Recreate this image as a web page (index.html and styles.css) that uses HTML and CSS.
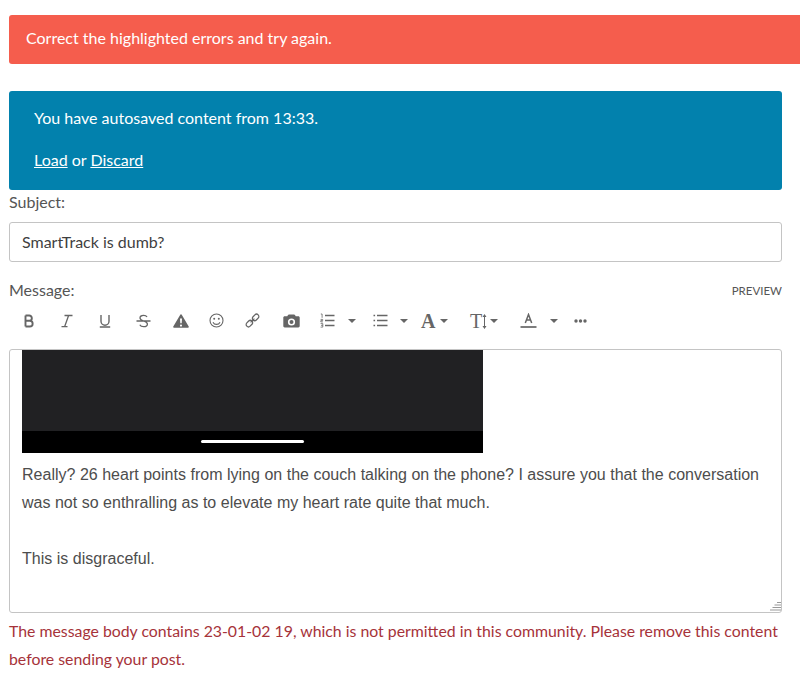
FILE: index.html
```html
<!DOCTYPE html>
<html lang="en">
<head>
<meta charset="utf-8">
<title>Compose message</title>
<link rel="stylesheet" href="styles.css">
</head>
<body>
<main class="page">
  <div class="alert alert-error">Correct the highlighted errors and try again.</div>
  <div class="alert alert-info">
    <p class="info-line">You have autosaved content from 13:33.</p>
    <p class="info-line"><a href="#">Load</a> or <a href="#">Discard</a></p>
  </div>
  <label class="field-label subject-label">Subject:</label>
  <div class="input">SmartTrack is dumb?</div>
  <div class="message-head">
    <label class="field-label">Message:</label>
    <a class="preview" href="#">PREVIEW</a>
  </div>
  <div class="toolbar">
    <span class="tool t-b"><svg width="12" height="14" viewBox="0 0 12 14"><path class="ln" stroke-width="1.9" d="M2.500 1.500v11M2.500 1.500h3.700a2.600 2.600 0 0 1 0 5.300H2.500M6.200 6.800h.6a2.850 2.850 0 0 1 0 5.700H2.500"/></svg></span>
    <span class="tool t-i"><svg width="14" height="14" viewBox="0 0 14 14"><path class="ln" stroke-width="1.3" d="M4.500 1.500h8M1.500 12.700h6M8.600 1.500L4.600 12.700"/></svg></span>
    <span class="tool t-u"><svg width="12" height="14" viewBox="0 0 12 14"><path class="ln" stroke-width="1.4" d="M2 1v6.200a4 4 0 0 0 8 0V1M.8 13h10.400"/></svg></span>
    <span class="tool t-s"><svg width="15" height="14" viewBox="0 0 15 14"><path class="ln" stroke-width="1.3" d="M11 3a3.600 2.500 0 0 0-3.400-1.600C5.500 1.400 4 2.500 4 4c0 3.500 7.400 2.500 7.400 6 0 1.600-1.700 2.700-3.700 2.700-1.800 0-3.300-.7-3.900-2M.5 7h14"/></svg></span>
    <span class="tool t-warn"><svg width="16" height="14" viewBox="0 0 16 14"><path class="fl" fill-rule="evenodd" d="M8 .3c.4 0 .7.2.9.6l6.800 11.600c.4.7 0 1.300-.8 1.300H1.100c-.8 0-1.200-.6-.8-1.300L7.100.9C7.300.5 7.600.3 8 .3zM7 4.500l.3 4.800h1.400L9 4.500H7zm1 6a1.100 1.100 0 1 0 0 2.200 1.100 1.100 0 0 0 0-2.200z"/></svg></span>
    <span class="tool t-smile"><svg width="15" height="15" viewBox="0 0 15 15"><circle class="ln" cx="7.500" cy="7.500" r="6.500" stroke-width="1.100"/><circle class="fl" cx="5.200" cy="5.800" r="1"/><circle class="fl" cx="9.800" cy="5.800" r="1"/><path class="ln" stroke-width="1.100" d="M4 9.200c.7 1.500 2 2.200 3.500 2.200s2.800-.7 3.500-2.200"/></svg></span>
    <span class="tool t-link"><svg width="15" height="15" viewBox="0 0 15 15"><g class="ln" stroke-width="1.300"><rect x="-3.600" y="-2.300" width="7.200" height="4.600" rx="2.300" transform="translate(4.400 10.600) rotate(-45)"/><rect x="-3.600" y="-2.300" width="7.200" height="4.600" rx="2.300" transform="translate(10.600 4.400) rotate(-45)"/><path d="M5.600 9.400l3.800-3.800"/></g></svg></span>
    <span class="tool t-cam"><svg width="17" height="14" viewBox="0 0 17 14"><path class="fl" fill-rule="evenodd" d="M6 .4h5c.5 0 .8.2 1 .6l.7 1.300h2.600c.8 0 1.400.6 1.400 1.400v8.400c0 .8-.6 1.400-1.400 1.400H1.700c-.8 0-1.400-.6-1.400-1.400V3.700c0-.8.6-1.400 1.400-1.400h2.600L5 1c.2-.4.5-.6 1-.6zM8.500 4.400a3.600 3.600 0 1 0 0 7.200 3.600 3.600 0 0 0 0-7.200zm0 1.600a2 2 0 1 1 0 4 2 2 0 0 1 0-4z"/></svg></span>
    <span class="tool t-ol"><svg width="15" height="15" viewBox="0 0 15 15"><path class="ln" stroke-width="1.300" d="M5 2.500h9.500M5 7.500h9.500M5 12.500h9.500"/><path class="ln" stroke-width=".8" d="M.8 1h1.300v3.800M.6 6.400h2.100v1.200H.8v1.300h2.100M.6 10.600h2.200v3.500H.6M1 12.300h1.800"/></svg></span>
    <span class="caret c-ol"></span>
    <span class="tool t-ul"><svg width="15" height="13" viewBox="0 0 15 13"><path class="ln" stroke-width="1.300" d="M4 1.500h10.500M4 6.500h10.500M4 11.500h10.500"/><path class="ln" stroke-width="1.600" d="M.5 1.500h1.600M.5 6.500h1.600M.5 11.500h1.600"/></svg></span>
    <span class="caret c-ul"></span>
    <span class="tool t-font">A</span>
    <span class="caret c-font"></span>
    <span class="tool t-size">T<svg class="size-arrow" width="5" height="15" viewBox="0 0 5 15"><path class="ln" stroke-width="1" d="M2.500 1v13"/><path class="fl" d="M2.500 0L4.500 3H.5zM2.500 15L.5 12h4z"/></svg></span>
    <span class="caret c-size"></span>
    <span class="tool t-color"><svg width="17" height="15" viewBox="0 0 17 15"><path class="ln" stroke-width="1.500" d="M5.300 10L8.500 1.500l3.200 8.500M6.400 7h4.200"/><path class="ln" stroke-width="1.700" d="M.5 14h16"/></svg></span>
    <span class="caret c-color"></span>
    <span class="tool t-more"><svg width="13" height="4" viewBox="0 0 13 4"><circle class="fl" cx="2" cy="2" r="1.700"/><circle class="fl" cx="6.500" cy="2" r="1.700"/><circle class="fl" cx="11" cy="2" r="1.700"/></svg></span>
  </div>
  <div class="editor">
    <div class="shot"><div class="shot-top"></div><div class="shot-bar"><span class="home"></span></div></div>
    <p class="body-text">Really? 26 heart points from lying on the couch talking on the phone? I assure you that the conversation was not so enthralling as to elevate my heart rate quite that much.</p>
    <p class="body-text para">This is disgraceful.</p>
    <svg class="grip" width="11" height="9" viewBox="0 0 11 9"><path d="M7 .5h4M4.500 3h6.500M2.500 5.500h8.500M0 8h11"/></svg>
  </div>
  <p class="error-text">The message body contains 23-01-02 19, which is not permitted in this community. Please remove this content before sending your post.</p>
</main>
</body>
</html>
```

FILE: styles.css
```css
* { box-sizing: border-box; }
html, body { margin: 0; height: 684px; overflow: hidden; background: #fff; }
body { font-family: "Lato", "Liberation Sans", sans-serif; font-size: 16px; color: #4a4a4a; }
.page { padding: 15px 18px 0 9px; }
.alert { color: #fff; }
.alert-error { background: #f55d4d; height: 49px; padding: 0 17px; line-height: 46px; border-radius: 3px 0 0 3px; margin-right: -18px; }
.alert-info { background: #0281ad; height: 99px; margin-top: 27px; padding: 6px 25px; border-radius: 3px; }
.info-line { margin: 0; line-height: 42px; }
.alert-info a { color: #fff; }
.field-label { display: block; color: #555; line-height: 24px; }
.input { margin-top: 8px; height: 40px; border: 1px solid #c4c4c4; border-radius: 3px; padding: 0 12px; line-height: 38px; color: #3f3f3f; }
.message-head { display: flex; justify-content: space-between; align-items: center; margin-top: 16px; }
.preview { font-size: 11.500px; color: #555; text-decoration: none; }
.toolbar { position: relative; height: 47px; }
.tool, .caret { position: absolute; display: flex; align-items: center; justify-content: center; }
.ln { fill: none; stroke: #666; }
.fl { fill: #666; }
.tool svg { display: block; }
.t-b { left: 14px; top: 12px; }
.t-i { left: 51px; top: 12px; }
.t-u { left: 90px; top: 12px; }
.t-s { left: 127px; top: 12px; }
.t-warn { left: 164px; top: 12px; }
.t-smile { left: 200px; top: 11px; }
.t-link { left: 236px; top: 11px; }
.t-cam { left: 274px; top: 12px; }
.t-ol { left: 311px; top: 11px; }
.t-ul { left: 364px; top: 12px; }
.t-font { left: 412px; top: 7px; font: bold 20px/24px "Liberation Serif", serif; color: #666; }
.t-size { left: 461px; top: 7px; font: 20px/24px "Liberation Serif", serif; color: #666; }
.t-color { left: 511px; top: 11px; }
.t-more { left: 565px; top: 17px; }
.caret { width: 0; height: 0; border-left: 4px solid transparent; border-right: 4px solid transparent; border-top: 4px solid #666; top: 17px; }
.c-ol { left: 339px; }
.c-ul { left: 391px; }
.c-font { left: 431px; }
.c-size { left: 481px; }
.c-color { left: 541px; }
.editor { position: relative; height: 264px; border: 1px solid #c4c4c4; border-radius: 3px; padding: 0 12px; }
.shot { width: 461px; height: 103px; background: #000; }
.shot-top { height: 80.500px; background: #212123; }
.shot-bar { height: 22.500px; display: flex; justify-content: center; padding-top: 9px; }
.home { width: 103px; height: 3.500px; border-radius: 2px; background: #fff; }
.body-text { margin: 8px 0 0; font-family: "Liberation Sans", sans-serif; font-size: 16px; letter-spacing: .014px; line-height: 28px; color: #4d4d4d; }
.para { margin-top: 28px; }
.grip { position: absolute; right: 0; bottom: 1px; }
.grip path { fill: none; stroke: #999; stroke-width: 1; }
.error-text { margin: 4px 0 0; font-size: 15.830px; color: #a6333a; line-height: 28px; }
```
